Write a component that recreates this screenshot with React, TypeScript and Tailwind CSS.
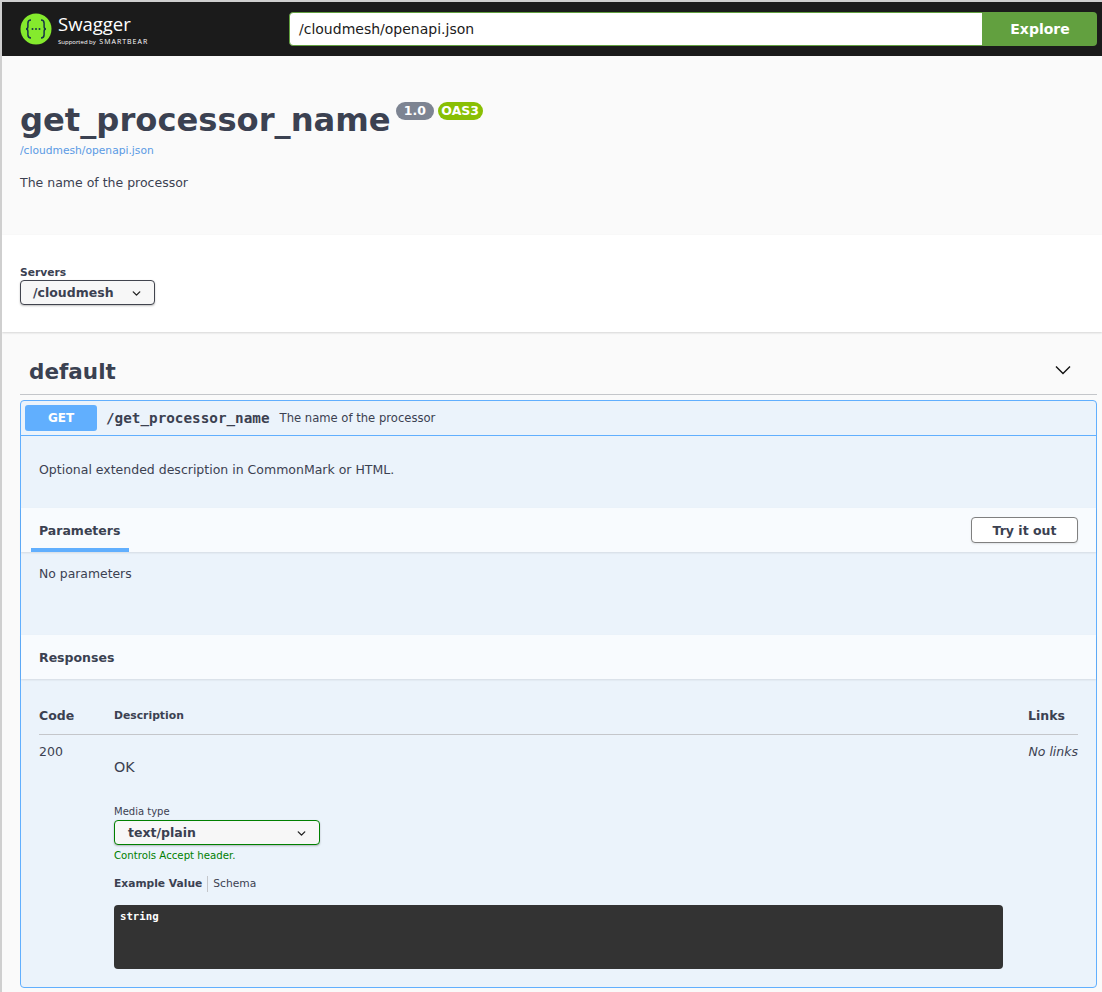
import { ChevronDown } from "lucide-react";

function Logo() {
  return (
    <svg width="32" height="32" viewBox="0 0 32 32" fill="none">
      <circle cx="16" cy="16" r="15.500" fill="#85ea2d" />
      <path d="M11 7c-2.600 0-3.100 1-3.100 3.200v3.300c0 1.400-.6 2.500-1.900 2.500 1.300 0 1.900 1.100 1.900 2.500v3.300c0 2.200.5 3.200 3.100 3.200" stroke="#173647" strokeWidth="1.500" />
      <path d="M21 7c2.600 0 3.100 1 3.100 3.200v3.300c0 1.400.6 2.500 1.900 2.500-1.300 0-1.900 1.100-1.900 2.500v3.300c0 2.200-.5 3.200-3.100 3.200" stroke="#173647" strokeWidth="1.500" />
      <circle cx="12.500" cy="16" r="1" fill="#173647" />
      <circle cx="16" cy="16" r="1" fill="#173647" />
      <circle cx="19.500" cy="16" r="1" fill="#173647" />
    </svg>
  );
}

function SelectBox({ label, width, green }: { label: string; width: string; green?: boolean }) {
  return (
    <div
      className={`${width} h-[25px] flex items-center justify-between pr-[11px] pt-[1px] rounded-[4px] bg-[#f7f7f7] border-[1.500px] shadow-[0_1px_2px_0_rgba(0,0,0,0.25)] text-[#3b4151] text-[12.500px] font-bold ${
        green ? "border-[#008000] pl-[13px]" : "border-[#41444e] pl-[12px]"
      }`}
    >
      <span>{label}</span>
      <ChevronDown size={13} strokeWidth={2.500} color="#222" />
    </div>
  );
}

export default function App() {
  return (
    <div className="border-l-2 border-t-2 border-[#cfcfcf] bg-[#fafafa] text-[#3b4151] font-['DejaVu_Sans',sans-serif] h-[992px] overflow-hidden">
      <header className="h-[54px] bg-[#1b1b1b] flex items-center pl-[18px] pr-[5px]">
        <div className="w-[269px] flex items-center gap-[6px]">
          <Logo />
          <div className="text-white font-['Open_Sans',sans-serif]">
            <div className="text-[18.500px] leading-[24px]">Swagger</div>
            <div className="text-[6px] leading-[8px] mt-[2px] whitespace-nowrap">
              Supported by <span className="tracking-[1px] text-[7px] ml-[2px]">SMARTBEAR</span>
            </div>
          </div>
        </div>
        <div className="flex-1 flex h-[34px]">
          <div className="flex-1 bg-white border border-[#62a03f] rounded-l-[4px] pl-[9px] flex items-center text-[14px] text-[#1b1b1b]">
            /cloudmesh/openapi.json
          </div>
          <div className="w-[114px] bg-[#62a03f] rounded-r-[4px] text-white font-bold text-[14px] flex items-center justify-center">
            Explore
          </div>
        </div>
      </header>

      <section className="h-[179px] px-[18px] pt-[42px]">
        <div className="flex items-start">
          <h1 className="text-[32.200px] leading-[45px] font-bold">get_processor_name</h1>
          <div className="flex gap-[4px] ml-[5px] mt-[4px]">
            <span className="h-[18px] px-[8px] pt-[1px] rounded-full bg-[#7d8492] text-white text-[12.500px] font-bold flex items-center">1.0</span>
            <span className="h-[18px] px-[3.500px] pt-[1px] rounded-full bg-[#89bf04] text-white text-[12.500px] font-bold flex items-center">OAS3</span>
          </div>
        </div>
        <div className="text-[#4990e2] text-[10.700px] leading-[15px] opacity-90">/cloudmesh/openapi.json</div>
        <p className="text-[12.500px] leading-[16px] mt-[17px]">The name of the processor</p>
      </section>

      <section className="h-[97px] bg-white px-[18px] pt-[30px] shadow-[0_1px_2px_0_rgba(0,0,0,0.15)] relative">
        <div className="text-[10.700px] leading-[15px] font-bold">Servers</div>
        <SelectBox label="/cloudmesh" width="w-[135px]" />
      </section>

      <section className="px-[18px] pr-[5px]">
        <div className="h-[63px] border-b border-[#c4c6ca] flex items-center justify-between pl-[9px] pr-[26px] pt-[17px]">
          <h2 className="text-[21.500px] font-bold leading-[30px]">default</h2>
          <svg width="16" height="10" viewBox="0 0 16 10" fill="none" className="mt-[-3px]">
            <path d="M1 1.500 8 8.500 15 1.500" stroke="#111" strokeWidth="1.400" />
          </svg>
        </div>

        <div className="mt-[5px] h-[588px] border border-[#61affe] rounded-[4px] bg-[#ebf3fb]">
          <div className="h-[35px] border-b border-[#61affe] flex items-center pl-[4px]">
            <span className="w-[72px] h-[26px] rounded-[3px] bg-[#61affe] text-white text-[12px] font-bold flex items-center justify-center">GET</span>
            <span className="ml-[9px] pt-[2px] font-['DejaVu_Sans_Mono',monospace] text-[14.300px] font-bold">/get_processor_name</span>
            <span className="ml-[10px] pt-[2px] text-[11.600px]">The name of the processor</span>
          </div>

          <div className="h-[72px] pl-[18px] pt-[25px] text-[12.500px] leading-[18px]">Optional extended description in CommonMark or HTML.</div>

          <div className="h-[44px] bg-[#f8fbfe] shadow-[0_1px_2px_rgba(0,0,0,0.1)] flex items-stretch justify-between pr-[18px]">
            <div className="ml-[10px] w-[98px] pl-[8px] border-b-[4px] border-[#61affe] text-[12.500px] font-bold flex items-center pt-[7px]">Parameters</div>
            <div className="mt-[9px] w-[107px] h-[26px] rounded-[4px] border border-[#808080] bg-white text-[12.500px] font-bold flex items-center justify-center pt-[3px] shadow-[0_1px_2px_rgba(0,0,0,0.1)]">Try it out</div>
          </div>

          <div className="h-[83px] pl-[18px] pt-[14px] text-[12.400px] leading-[16px]">No parameters</div>

          <div className="h-[44px] bg-[#f8fbfe] shadow-[0_1px_2px_rgba(0,0,0,0.1)] pl-[18px] flex items-center pt-[2px] text-[12.500px] font-bold">Responses</div>

          <div className="px-[18px] pt-[20px]">
            <div className="h-[36px] border-b border-[#c4c6ca] flex items-center justify-between font-bold text-[12.500px]">
              <div className="flex items-center">
                <span className="w-[75px]">Code</span>
                <span className="text-[10.800px]">Description</span>
              </div>
              <span className="mr-[13px]">Links</span>
            </div>
            <div className="flex pt-[9px]">
              <div className="w-[75px] text-[12.500px] leading-[16px]">200</div>
              <div className="flex-1">
                <div className="text-[14.300px] leading-[18px] mt-[14px]">OK</div>
                <div className="text-[10px] leading-[13px] mt-[29px]">Media type</div>
                <div className="mt-[2px]">
                  <SelectBox label="text/plain" width="w-[206px]" green />
                </div>
                <div className="text-[10.200px] leading-[13px] text-[#008000] mt-[4px]">Controls Accept header.</div>
                <div className="flex items-center text-[10.700px] mt-[15px] h-[14px]">
                  <span className="font-bold pr-[5px] border-r border-[#c4c6ca]">Example Value</span>
                  <span className="pl-[5px]">Schema</span>
                </div>
                <div className="mt-[14px] w-[889px] h-[64px] rounded-[4px] bg-[#333] text-white font-['DejaVu_Sans_Mono',monospace] font-bold text-[10.700px] leading-[13px] py-[5px] pl-[6px]">string</div>
              </div>
              <div className="italic text-[12.500px] leading-[16px] whitespace-nowrap">No links</div>
            </div>
          </div>
        </div>
      </section>
    </div>
  );
}
